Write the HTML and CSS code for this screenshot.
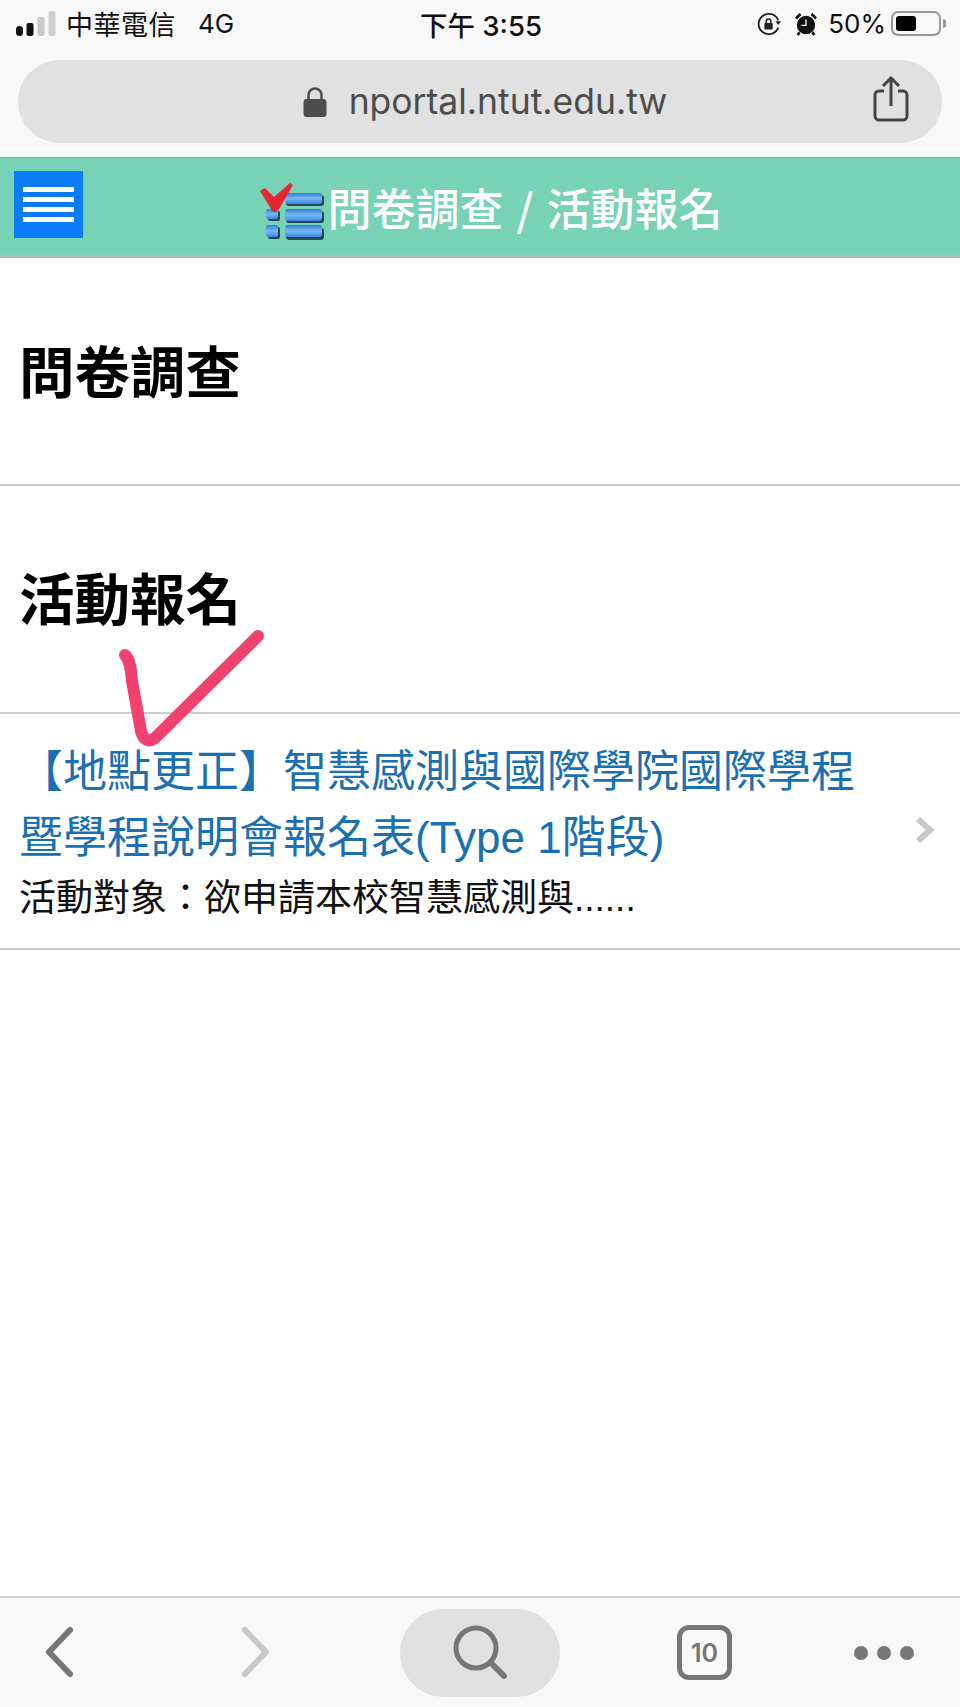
FILE: index.html
```html
<!DOCTYPE html>
<html lang="zh-Hant">
<head>
  <meta charset="utf-8">
  <meta name="viewport" content="width=device-width, initial-scale=1"/>
  <title>問卷調查 / 活動報名</title>
  <link rel="stylesheet" href="styles.css">
</head>
<body>
<div id="phone">
  <div id="chrome-top">
    <div id="status">
      <div class="status-left">
        <svg class="signal" width="40" height="30" viewBox="0 0 40 30">
          <rect x="0" y="17" width="7" height="10" rx="3.500" fill="#111"/>
          <rect x="10.500" y="14" width="7" height="13" rx="2" fill="#111"/>
          <rect x="21.500" y="8" width="7" height="19" rx="2" fill="#c9c9c9"/>
          <rect x="32.500" y="2" width="7" height="25" rx="2" fill="#d0d0d0"/>
        </svg>
        <span class="carrier">中華電信</span>
        <span class="net">4G</span>
      </div>
      <div class="status-time">下午 3:55</div>
      <div class="status-right">
        <svg class="rotate-lock" width="24" height="24" viewBox="0 0 26 26">
          <path d="M23 9A11 11 0 1 0 23 17" fill="none" stroke="#222" stroke-width="2"/>
          <path d="M20 10h6l-3 4z" fill="#222"/>
          <rect x="8" y="12" width="9" height="7" rx="1" fill="#222"/>
          <path d="M10 12V10a2.500 2.500 0 0 1 5 0v2" fill="none" stroke="#222" stroke-width="1.600"/>
        </svg>
        <svg class="alarm" width="22" height="24" viewBox="0 0 24 26">
          <circle cx="12" cy="14" r="10" fill="#111"/>
          <path d="M1 7l5-5M23 7l-5-5M5 22l-2 3M19 22l2 3" stroke="#111" stroke-width="3"/>
          <path d="M12 8v6.500H7" fill="none" stroke="#f8f8f8" stroke-width="1.500"/>
        </svg>
        <span class="battery-pct">50%</span>
        <span class="battery"><span class="battery-level"></span></span>
        <span class="battery-cap"></span>
      </div>
    </div>
    <div id="urlbar">
      <svg class="lock" width="24" height="30" viewBox="0 0 24 30">
        <rect x="0.500" y="12" width="23" height="18" rx="3" fill="#4d4d4d"/>
        <path d="M5.500 13V8a6.500 6.500 0 0 1 13 0v5" fill="none" stroke="#4d4d4d" stroke-width="2.500"/>
      </svg>
      <span class="url">nportal.ntut.edu.tw</span>
      <svg class="share" width="36" height="46" viewBox="0 0 36 46">
        <path d="M11 15H6a4 4 0 0 0-4 4v21a4 4 0 0 0 4 4h24a4 4 0 0 0 4-4V19a4 4 0 0 0-4-4h-5" fill="none" stroke="#444" stroke-width="3"/>
        <path d="M18 30V3M10 10l8-8 8 8" fill="none" stroke="#444" stroke-width="3"/>
      </svg>
    </div>
  </div>

  <header id="title-bar">
    <button id="menu-btn" aria-label="menu"><span></span><span></span><span></span><span></span></button>
    <h1>
      <svg class="form-icon" width="66" height="58" viewBox="0 0 66 58">
        <defs>
          <linearGradient id="bar" x1="0" y1="0" x2="0" y2="1">
            <stop offset="0" stop-color="#2f7fd8"/>
            <stop offset="0.500" stop-color="#7ab8f2"/>
            <stop offset="1" stop-color="#3a86dc"/>
          </linearGradient>
        </defs>
        <rect x="26" y="12" width="38" height="11" rx="3" fill="#2b4558"/>
        <rect x="26" y="28" width="38" height="12" rx="3" fill="#2b4558"/>
        <rect x="26" y="45" width="38" height="12" rx="3" fill="#2b4558"/>
        <rect x="25" y="10" width="37" height="11" rx="3" fill="url(#bar)"/>
        <rect x="25" y="26" width="37" height="12" rx="3" fill="url(#bar)"/>
        <rect x="25" y="42" width="37" height="12" rx="3" fill="url(#bar)"/>
        <rect x="8" y="28" width="12" height="10" rx="2" fill="#2b4558"/>
        <rect x="8" y="44" width="12" height="12" rx="2" fill="#2b4558"/>
        <rect x="6" y="26" width="12" height="10" rx="2" fill="url(#bar)"/>
        <rect x="6" y="42" width="12" height="12" rx="2" fill="url(#bar)"/>
        <path d="M0 8l5-3 9 9L30 0l3 2-14 24-3 3h-3z" fill="#e5252f"/>
      </svg>問卷調查 / 活動報名
    </h1>
  </header>

  <main id="content">
    <h2 class="group-title">問卷調查</h2>
    <h2 class="group-title group-second">活動報名</h2>
    <a class="item" href="#">
      <div class="item-body">
        <div class="item-title">【地點更正】智慧感測與國際學院國際學程<br>暨學程說明會報名表(Type 1階段)</div>
        <div class="item-desc">活動對象：欲申請本校智慧感測與......</div>
      </div>
      <svg class="item-arrow" width="22" height="30" viewBox="0 0 22 30">
        <path d="M4 4l12 11L4 26" fill="none" stroke="#c6c8cc" stroke-width="6"/>
      </svg>
    </a>
    <!-- hand-drawn tick over the list -->
    <svg class="tick" width="160" height="130" viewBox="0 0 160 130">
      <path d="M15 29C20 34 21 42 22 55L31 105Q35 119 45 112L148 10" fill="none" stroke="#f0416f" stroke-width="12" stroke-linecap="round" stroke-linejoin="round"/>
    </svg>
  </main>

  <footer id="toolbar">
    <svg width="30" height="56" viewBox="0 0 30 56">
      <path d="M25 5L4 27l21 22" fill="none" stroke="#767676" stroke-width="6" stroke-linecap="round" stroke-linejoin="round"/>
    </svg>
    <svg class="btn-forward" width="30" height="56" viewBox="0 0 30 56">
      <path d="M5 5l21 22L5 49" fill="none" stroke="#c8c8c8" stroke-width="6" stroke-linecap="round" stroke-linejoin="round"/>
    </svg>
    <div class="search-pill">
      <svg width="54" height="56" viewBox="0 0 54 56">
        <circle cx="23" cy="23" r="20" fill="none" stroke="#767676" stroke-width="5"/>
        <path d="M38 38l13 13" stroke="#767676" stroke-width="6" stroke-linecap="round"/>
      </svg>
    </div>
    <div class="tabs">10</div>
    <div class="more"><i></i><i></i><i></i></div>
  </footer>
</div>
</body>
</html>
```

FILE: styles.css
```css
* {
  box-sizing: border-box;
}

html, body {
  margin: 0;
  padding: 0;
}

body {
  background: #fff;
  font-family: "Liberation Sans", "Noto Sans CJK TC", sans-serif;
  color: #000;
}

#phone {
  width: 960px;
  height: 1707px;
  display: flex;
  flex-direction: column;
  overflow: hidden;
}

/* browser chrome */
#chrome-top {
  height: 157px;
  background: #f8f8f8;
  padding: 0 18px;
}

#status {
  height: 60px;
  display: grid;
  grid-template-columns: 1fr auto 1fr;
  align-items: center;
  margin: 0 -4px;
  padding: 0 0 13px 2px;
  font-size: 27px;
  color: #111;
}

.status-left {
  display: flex;
  align-items: center;
}

.signal {
  margin-right: 10px;
}

.carrier {
  letter-spacing: 0.500px;
}

.net {
  margin-left: 22px;
  font-family: "Inter", sans-serif;
  font-size: 26px;
}

.status-time {
  font-family: "Inter", "Noto Sans CJK TC", sans-serif;
  font-weight: 500;
  font-size: 27.500px;
}

.status-right {
  display: flex;
  align-items: center;
  justify-content: flex-end;
}

.alarm {
  margin-left: 14px;
}

.battery-pct {
  font-family: "Inter", sans-serif;
  font-size: 26px;
  margin-left: 11px;
  margin-right: 5px;
}

.battery {
  width: 50px;
  height: 25px;
  border: 2px solid #999;
  border-radius: 7px;
  padding: 3px;
}

.battery-level {
  display: block;
  width: 20px;
  height: 100%;
  background: #000;
  border-radius: 3px;
}

.battery-cap {
  width: 3px;
  height: 9px;
  margin-left: 2px;
  background: #999;
  border-radius: 0 3px 3px 0;
}

#urlbar {
  height: 83px;
  border-radius: 42px;
  background: #e1e1e1;
  display: flex;
  align-items: center;
  justify-content: center;
  position: relative;
  gap: 22px;
  padding-left: 10px;
}

.url {
  font-family: "Inter", sans-serif;
  font-size: 35.500px;
  color: #4c4c4c;
}

.share {
  position: absolute;
  right: 33px;
  top: 16px;
}

/* page header */
#title-bar {
  height: 101px;
  background: #78d2b5;
  border-top: 1px solid #6cb59d;
  border-bottom: 3px solid #b5b9b8;
  padding: 13px 14px;
  position: relative;
}

#menu-btn {
  width: 69px;
  height: 67px;
  background: #0a7cf7;
  border: 0;
  padding: 16px 9px;
  display: flex;
  flex-direction: column;
  justify-content: space-between;
}

#menu-btn span {
  display: block;
  height: 5px;
  background: #fff;
}

h1 {
  position: absolute;
  left: 0;
  right: 0;
  top: 0;
  bottom: 0;
  margin: 0;
  display: flex;
  align-items: center;
  justify-content: center;
  font-family: "Noto Sans CJK TC", sans-serif;
  font-weight: 500;
  font-size: 44px;
  word-spacing: 3px;
  color: #fff;
  padding-left: 22px;
}

.form-icon {
  margin-top: 10px;
  margin-right: 2px;
}

/* list */
#content {
  flex: 1;
  position: relative;
}

.group-title {
  margin: 0;
  font-size: 55.500px;
  font-weight: 700;
  line-height: 78px;
  padding: 77px 19px 0;
  height: 228px;
  border-bottom: 2px solid #ccc;
}

.group-second {
  padding-top: 76px;
}

.item {
  display: flex;
  align-items: center;
  height: 236px;
  padding: 0 19px;
  border-bottom: 2px solid #ccc;
  text-decoration: none;
}

.item-body {
  flex: 1;
}

.item-title {
  font-size: 44px;
  line-height: 66px;
  color: #1a70b2;
}

.item-desc {
  font-size: 37px;
  line-height: 50px;
  margin-top: 3px;
  color: #111;
}

.item-arrow {
  margin-right: 5px;
  margin-top: -2px;
}

.tick {
  position: absolute;
  top: 368px;
  left: 110px;
}

/* bottom toolbar */
#toolbar {
  height: 111px;
  background: #f8f8f8;
  border-top: 2px solid #d2d2d2;
  display: flex;
  align-items: center;
  padding: 0 45px;
}

.btn-forward {
  margin-left: 165px;
}

.search-pill {
  margin-left: 130px;
  width: 160px;
  height: 88px;
  border-radius: 44px;
  background: #e1e1e1;
  display: flex;
  align-items: center;
  justify-content: center;
}

.tabs {
  margin-left: 117px;
  width: 55px;
  height: 55px;
  border: 5px solid #767676;
  border-radius: 12px;
  display: flex;
  align-items: center;
  justify-content: center;
  font-family: "Inter", sans-serif;
  font-weight: 600;
  font-size: 25px;
  color: #767676;
}

.more {
  margin-left: 122px;
  display: flex;
  gap: 9px;
}

.more i {
  width: 14px;
  height: 14px;
  border-radius: 50%;
  background: #767676;
}
```
